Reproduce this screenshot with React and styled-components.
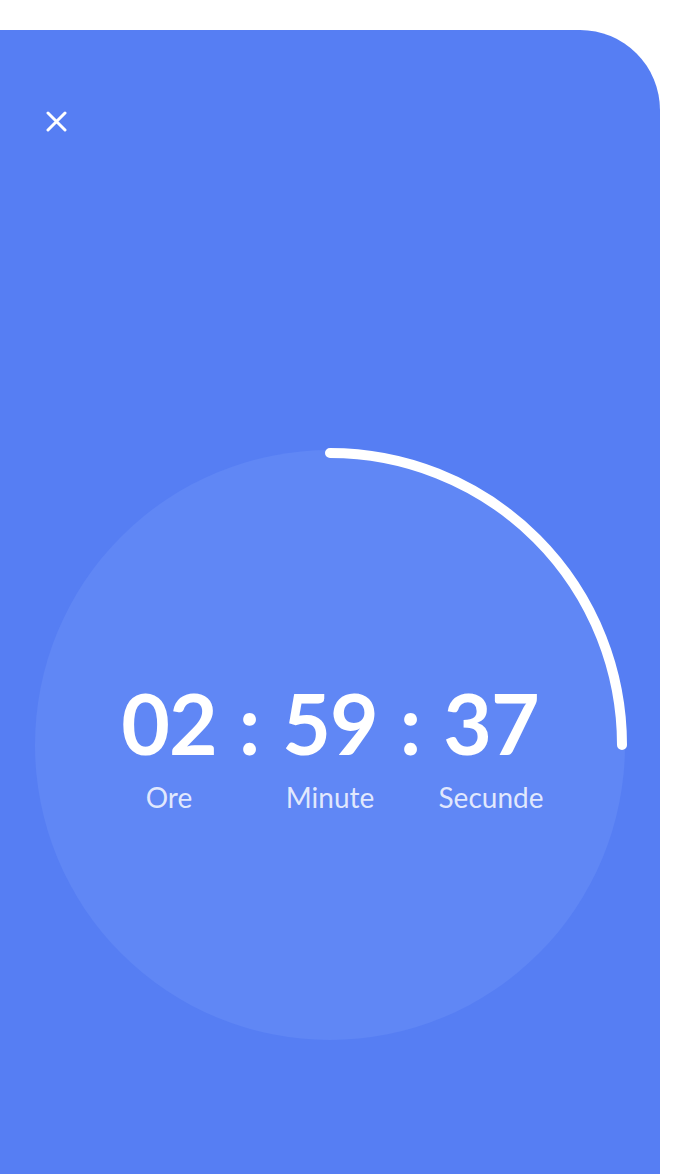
import React from "react";
import styled, { createGlobalStyle } from "styled-components";

const GlobalStyle = createGlobalStyle`
  html, body {
    margin: 0;
    padding: 0;
    background: #ffffff;
    font-family: Lato, "Open Sans", sans-serif;
  }
`;

const Page = styled.div`
  width: 690px;
  height: 1174px;
  padding-top: 30px;
  box-sizing: border-box;
  overflow: hidden;
`;

const Panel = styled.div`
  width: 660px;
  height: 1144px;
  background-color: #567ef3;
  border-top-right-radius: 80px;
  display: flex;
  flex-direction: column;
`;

const Header = styled.div`
  padding: 81px 0 0 46px;
  display: flex;
`;

const CloseButton = styled.button`
  width: 21px;
  height: 21px;
  padding: 0;
  border: none;
  background: none;
  cursor: pointer;
  display: flex;
`;

const Ring = styled.div`
  position: relative;
  align-self: center;
  margin-top: 318px;
  width: 590px;
  height: 590px;
  border-radius: 50%;
  background-color: #6087f5;
  display: flex;
  align-items: center;
  justify-content: center;
`;

const Progress = styled.svg`
  position: absolute;
  inset: 0;
  overflow: visible;
`;

const Clock = styled.div`
  display: flex;
  align-items: flex-start;
  margin-top: 4px;
`;

const Unit = styled.div`
  width: 120px;
  display: flex;
  flex-direction: column;
  align-items: center;
`;

const Digits = styled.div`
  font-size: 84px;
  font-weight: 700;
  line-height: 84px;
  color: #ffffff;
  letter-spacing: -1px;
`;

const Colon = styled.div`
  width: 41px;
  text-align: center;
  font-size: 84px;
  font-weight: 700;
  line-height: 84px;
  color: #ffffff;
`;

const Label = styled.div`
  margin-top: 16px;
  font-size: 28px;
  line-height: 32px;
  color: rgba(255, 255, 255, 0.82);
`;

const units = [
  { value: "02", label: "Ore" },
  { value: "59", label: "Minute" },
  { value: "37", label: "Secunde" },
];

const App = () => {
  return (
    <Page>
      <GlobalStyle />
      <Panel>
        <Header>
          <CloseButton aria-label="Închide">
            <svg width="21" height="21" viewBox="0 0 21 21">
              <path
                d="M2 2 L19 19 M19 2 L2 19"
                stroke="#ffffff"
                strokeWidth="3"
                strokeLinecap="round"
              />
            </svg>
          </CloseButton>
        </Header>
        <Ring>
          <Progress viewBox="0 0 590 590" width="590" height="590">
            <path
              d="M 295 3 A 292 292 0 0 1 587 295"
              fill="none"
              stroke="#ffffff"
              strokeWidth="10"
              strokeLinecap="round"
            />
          </Progress>
          <Clock>
            {units.map((u, i) => (
              <React.Fragment key={u.label}>
                {i > 0 && <Colon>:</Colon>}
                <Unit>
                  <Digits>{u.value}</Digits>
                  <Label>{u.label}</Label>
                </Unit>
              </React.Fragment>
            ))}
          </Clock>
        </Ring>
      </Panel>
    </Page>
  );
};

export default App;
